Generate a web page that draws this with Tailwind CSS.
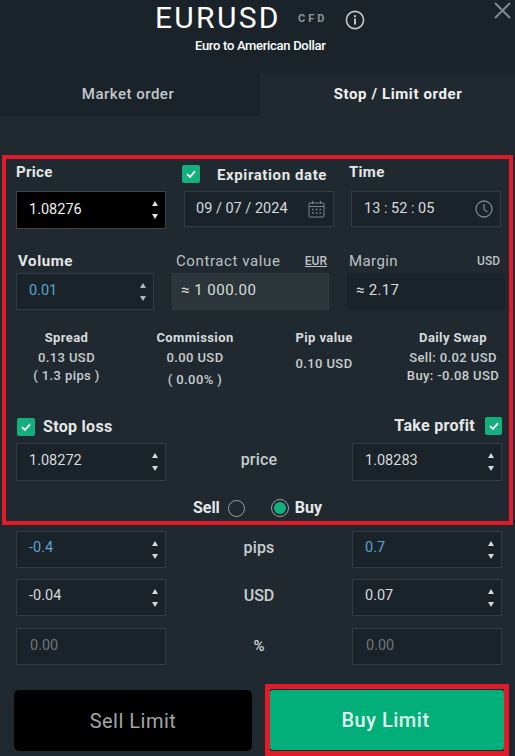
<!DOCTYPE html>
<html lang="en">
<head>
  <meta charset="UTF-8" />
  <meta name="viewport" content="width=device-width, initial-scale=1.0"/>
  <title>EURUSD order</title>
  <script src="https://cdn.jsdelivr.net/npm/@tailwindcss/browser@4"></script>
</head>
<body class="bg-[#20292f] text-white font-['Roboto',sans-serif] w-[515px] h-[756px] overflow-hidden relative">

  <!-- header -->
  <div class="h-[73px] bg-[#1a2329] relative">
    <div class="absolute left-[155px] top-[0px] text-[30px] leading-[36px] tracking-[2.3px] text-white">EURUSD</div>
    <div class="absolute left-[298px] top-[11px] text-[11px] leading-[16px] font-bold tracking-[3px] text-[#8d969b]">CFD</div>
    <svg class="absolute left-[345px] top-[10px]" width="20" height="20" viewBox="0 0 20 20" fill="none">
      <circle cx="10" cy="10" r="8.6" stroke="#c2c7ca" stroke-width="1.6"/>
      <rect x="9" y="8.6" width="2" height="6" fill="#c2c7ca"/>
      <rect x="9" y="5.2" width="2" height="2" fill="#c2c7ca"/>
    </svg>
    <div class="absolute left-[195px] top-[38px] text-[13px] leading-[16px] font-medium tracking-[-0.3px] text-white">Euro to American Dollar</div>
    <svg class="absolute left-[493px] top-[1px]" width="19" height="19" viewBox="0 0 19 19" fill="none">
      <path d="M2 2 L17 17 M17 2 L2 17" stroke="#7f898e" stroke-width="2"/>
    </svg>
  </div>

  <!-- tabs -->
  <div class="flex h-[43px] bg-[#1a2329]">
    <div class="w-[260px] pr-[4px] flex items-center justify-center text-[15px] font-medium tracking-[0.5px] text-[#c4c8ca]">Market order</div>
    <div class="w-[255px] pl-[21px] flex items-center justify-center bg-[#20292f] text-[15px] font-bold tracking-[0.6px] text-[#f0f1f2]">Stop / Limit order</div>
  </div>

  <!-- price row -->
  <div class="flex mt-[39px] pl-[16px] h-[29px] text-[15px] font-bold text-[#e4e6e7]">
    <div class="w-[166px] pt-[8px] leading-[18px] tracking-[0.3px]">Price</div>
    <div class="flex w-[167px] pt-[10px] leading-[18px]">
      <span class="w-[18px] h-[18px] rounded-[2px] bg-[#13b07e] flex items-center justify-center">
        <svg width="12" height="12" viewBox="0 0 12 12" fill="none"><path d="M2 6.2 L5 9 L10 3.2" stroke="#ffffff" stroke-width="1.8"/></svg>
      </span>
      <span class="ml-[17px] mt-[1px] tracking-[0.6px]">Expiration date</span>
    </div>
    <div class="pt-[8px] leading-[18px] tracking-[0.3px]">Time</div>
  </div>
  <div class="flex pl-[16px] mt-[7px] h-[38px] text-[14.5px] text-[#d6dadc]">
    <div class="w-[150px] h-[38px] bg-black border border-[#3a444a] flex items-center justify-between pl-[12px] pr-[7px] text-[#eef0f1]">
      <span>1.08276</span>
      <span class="flex flex-col gap-[8px]">
        <svg width="6" height="5" viewBox="0 0 6 5"><path d="M3 0 L6 5 L0 5 Z" fill="#e2e5e6"/></svg>
        <svg width="6" height="5" viewBox="0 0 6 5"><path d="M0 0 L6 0 L3 5 Z" fill="#e2e5e6"/></svg>
      </span>
    </div>
    <div class="ml-[18px] w-[150px] h-[36px] bg-[#1a2329] border border-[#323c42] flex items-center justify-between pl-[11px] pr-[8px]">
      <span>09 / 07 / 2024</span>
      <svg width="17" height="18" viewBox="0 0 17 18" fill="none" stroke="#7c868b">
        <rect x="1" y="3" width="15" height="14" rx="1"/>
        <path d="M1 6.5 H16 M4.5 1 V4 M12.5 1 V4"/>
        <path d="M4 9.5 H5.5 M7.8 9.5 H9.3 M11.5 9.5 H13 M4 13 H5.5 M7.8 13 H9.3 M11.5 13 H13" stroke-width="1.4"/>
      </svg>
    </div>
    <div class="ml-[17px] w-[150px] h-[36px] bg-[#1a2329] border border-[#323c42] flex items-center justify-between pl-[12px] pr-[7px]">
      <span>13 : 52 : 05</span>
      <svg width="18" height="18" viewBox="0 0 18 18" fill="none" stroke="#7c868b" stroke-width="1.3">
        <circle cx="9" cy="9" r="8"/>
        <path d="M9 4 V9.5 L12.5 12"/>
      </svg>
    </div>
  </div>

  <!-- volume row -->
  <div class="flex pl-[16px] mt-[22px] h-[20px] text-[15px] leading-[20px]">
    <div class="w-[156px] pl-[2px] font-bold tracking-[0.6px] text-[#e4e6e7]">Volume</div>
    <div class="w-[155px] pl-[4px] flex justify-between text-[#bcc1c4] tracking-[0.6px]">
      <span>Contract value</span>
      <span class="text-[12px] font-medium underline tracking-normal">EUR</span>
    </div>
    <div class="ml-[21px] w-[152px] flex justify-between text-[#bcc1c4] tracking-[0.4px]">
      <span class="ml-[1px]">Margin</span>
      <span class="text-[12px] font-medium tracking-normal">USD</span>
    </div>
  </div>
  <div class="flex pl-[16px] mt-[2px] h-[37px] text-[14.5px]">
    <div class="w-[138px] bg-[#1a2329] border border-[#323c42] flex items-center justify-between pl-[12px] pr-[7px] text-[#57a5d1]">
      <span class="pb-[2px]">0.01</span>
      <span class="flex flex-col gap-[8px]">
        <svg width="6" height="5" viewBox="0 0 6 5"><path d="M3 0 L6 5 L0 5 Z" fill="#b4babd"/></svg>
        <svg width="6" height="5" viewBox="0 0 6 5"><path d="M0 0 L6 0 L3 5 Z" fill="#b4babd"/></svg>
      </span>
    </div>
    <div class="ml-[18px] w-[157px] bg-[#2c3539] border border-[#323c42] flex items-center pl-[8px] pb-[2px] text-[15px] tracking-[0.5px] text-[#dadddf]">≈ 1 000.00</div>
    <div class="ml-[18px] w-[158px] bg-[#1a2329] flex items-center pl-[9px] pb-[2px] text-[15px] tracking-[0.3px] text-[#dadddf]">≈ 2.17</div>
  </div>

  <!-- stats -->
  <div class="flex mt-[19px] h-[85px] text-[13px] leading-[18px] font-medium tracking-[0.4px] text-[#c9cdcf] text-center">
    <div class="w-[133px]">
      <div class="font-bold text-[#d8dbdd]">Spread</div>
      <div class="mt-[2px]">0.13 USD</div>
      <div>( 1.3 pips )</div>
    </div>
    <div class="w-[124px]">
      <div class="font-bold text-[#d8dbdd]">Commission</div>
      <div class="mt-[2px]">0.00 USD</div>
      <div class="mt-[4px]">( 0.00% )</div>
    </div>
    <div class="w-[134px]">
      <div class="font-bold text-[#d8dbdd]">Pip value</div>
      <div class="mt-[8px]">0.10 USD</div>
    </div>
    <div class="w-[124px]">
      <div class="font-bold text-[#d8dbdd]">Daily Swap</div>
      <div class="mt-[2px]">Sell: 0.02 USD</div>
      <div>Buy: -0.08 USD</div>
    </div>
  </div>

  <!-- stop loss / take profit -->
  <div class="flex justify-between items-center pl-[17px] pr-[13px] mt-[3px] h-[20px] text-[16px] font-bold tracking-[0.3px] text-[#e4e6e7]">
    <div class="flex items-center gap-[8px]">
      <span class="w-[18px] h-[18px] rounded-[2px] bg-[#13b07e] flex items-center justify-center">
        <svg width="12" height="12" viewBox="0 0 12 12" fill="none"><path d="M2 6.2 L5 9 L10 3.2" stroke="#ffffff" stroke-width="1.8"/></svg>
      </span>
      <span>Stop loss</span>
    </div>
    <div class="flex items-center gap-[10px] -mt-[2px]">
      <span class="tracking-[0.3px]">Take profit</span>
      <span class="w-[17px] h-[18px] rounded-[2px] bg-[#13b07e] flex items-center justify-center">
        <svg width="12" height="12" viewBox="0 0 12 12" fill="none"><path d="M2 6.2 L5 9 L10 3.2" stroke="#ffffff" stroke-width="1.8"/></svg>
      </span>
    </div>
  </div>

  <div class="grid grid-cols-[150px_186px_150px] pl-[16px] mt-[6px] h-[38px] items-center text-[14.5px] text-[#d6dadc]">
    <div class="h-[38px] bg-[#1a2329] border border-[#323c42] flex items-center justify-between pl-[12px] pr-[7px]">
      <span class="pb-[3px]">1.08272</span>
      <span class="flex flex-col gap-[8px]">
        <svg width="6" height="5" viewBox="0 0 6 5"><path d="M3 0 L6 5 L0 5 Z" fill="#d6dadc"/></svg>
        <svg width="6" height="5" viewBox="0 0 6 5"><path d="M0 0 L6 0 L3 5 Z" fill="#d6dadc"/></svg>
      </span>
    </div>
    <div class="text-center text-[16px] font-medium tracking-[0.2px] pb-[4px] text-[#c9cdcf]">price</div>
    <div class="h-[38px] bg-[#1a2329] border border-[#323c42] flex items-center justify-between pl-[12px] pr-[7px]">
      <span class="pb-[3px]">1.08283</span>
      <span class="flex flex-col gap-[8px]">
        <svg width="6" height="5" viewBox="0 0 6 5"><path d="M3 0 L6 5 L0 5 Z" fill="#d6dadc"/></svg>
        <svg width="6" height="5" viewBox="0 0 6 5"><path d="M0 0 L6 0 L3 5 Z" fill="#d6dadc"/></svg>
      </span>
    </div>
  </div>

  <!-- sell / buy radios -->
  <div class="flex justify-center items-center mt-[17px] h-[20px] text-[16px] font-bold text-[#e4e6e7]">
    <span>Sell</span>
    <span class="ml-[8px] w-[17px] h-[17px] rounded-full border border-[#9aa2a6]"></span>
    <span class="ml-[26px] w-[18px] h-[18px] rounded-full border border-[#9aa2a6] flex items-center justify-center">
      <span class="w-[12px] h-[12px] rounded-full bg-[#13b07e]"></span>
    </span>
    <span class="ml-[6px]">Buy</span>
  </div>

  <!-- pips -->
  <div class="grid grid-cols-[150px_186px_150px] pl-[16px] mt-[13px] h-[37px] items-center text-[14.5px] text-[#57a5d1]">
    <div class="h-[37px] bg-[#1a2329] border border-[#323c42] flex items-center justify-between pl-[12px] pr-[7px]">
      <span class="pb-[3px]">-0.4</span>
      <span class="flex flex-col gap-[8px]">
        <svg width="6" height="5" viewBox="0 0 6 5"><path d="M3 0 L6 5 L0 5 Z" fill="#d6dadc"/></svg>
        <svg width="6" height="5" viewBox="0 0 6 5"><path d="M0 0 L6 0 L3 5 Z" fill="#d6dadc"/></svg>
      </span>
    </div>
    <div class="text-center text-[16px] font-medium tracking-[0.2px] pb-[4px] text-[#c9cdcf]">pips</div>
    <div class="h-[37px] bg-[#1a2329] border border-[#323c42] flex items-center justify-between pl-[12px] pr-[7px]">
      <span class="pb-[3px]">0.7</span>
      <span class="flex flex-col gap-[8px]">
        <svg width="6" height="5" viewBox="0 0 6 5"><path d="M3 0 L6 5 L0 5 Z" fill="#d6dadc"/></svg>
        <svg width="6" height="5" viewBox="0 0 6 5"><path d="M0 0 L6 0 L3 5 Z" fill="#d6dadc"/></svg>
      </span>
    </div>
  </div>

  <!-- usd -->
  <div class="grid grid-cols-[150px_186px_150px] pl-[16px] mt-[11px] h-[37px] items-center text-[14.5px] text-[#d6dadc]">
    <div class="h-[37px] bg-[#1a2329] border border-[#323c42] flex items-center justify-between pl-[12px] pr-[7px]">
      <span class="pb-[3px]">-0.04</span>
      <span class="flex flex-col gap-[8px]">
        <svg width="6" height="5" viewBox="0 0 6 5"><path d="M3 0 L6 5 L0 5 Z" fill="#d6dadc"/></svg>
        <svg width="6" height="5" viewBox="0 0 6 5"><path d="M0 0 L6 0 L3 5 Z" fill="#d6dadc"/></svg>
      </span>
    </div>
    <div class="text-center text-[16px] font-medium pb-[4px] text-[#c9cdcf]">USD</div>
    <div class="h-[37px] bg-[#1a2329] border border-[#323c42] flex items-center justify-between pl-[12px] pr-[7px]">
      <span class="pb-[3px]">0.07</span>
      <span class="flex flex-col gap-[8px]">
        <svg width="6" height="5" viewBox="0 0 6 5"><path d="M3 0 L6 5 L0 5 Z" fill="#d6dadc"/></svg>
        <svg width="6" height="5" viewBox="0 0 6 5"><path d="M0 0 L6 0 L3 5 Z" fill="#d6dadc"/></svg>
      </span>
    </div>
  </div>

  <!-- percent -->
  <div class="grid grid-cols-[150px_186px_150px] pl-[16px] mt-[12px] h-[37px] items-center text-[14.5px] text-[#6d767b]">
    <div class="h-[37px] bg-[#1a2329] border border-[#323c42] flex items-center pl-[13px] pb-[1px]">0.00</div>
    <div class="text-center text-[15px] font-medium pb-[1px] text-[#d6dadc]">%</div>
    <div class="h-[37px] bg-[#1a2329] border border-[#323c42] flex items-center pl-[13px] pb-[1px]">0.00</div>
  </div>

  <!-- buttons -->
  <div class="flex pl-[14px] mt-[25px] h-[61px] text-[20px] tracking-[0.5px]">
    <div class="w-[238px] h-[61px] bg-black rounded-[5px] flex items-center justify-center text-[#a3a5a6]">Sell Limit</div>
    <div class="ml-[18px] w-[234px] h-[60px] bg-[#02af78] rounded-[3px] pr-[3px] flex items-center justify-center font-medium text-[#dff5ee]">Buy Limit</div>
  </div>

  <!-- red annotation boxes -->
  <div class="absolute left-[2px] top-[155px] w-[511px] h-[370px] border-[4px] border-[#e21b2a] pointer-events-none"></div>
  <div class="absolute left-[265px] top-[684px] w-[244px] h-[72px] border-[5px] border-[#e21b2a] pointer-events-none"></div>
</body>
</html>
